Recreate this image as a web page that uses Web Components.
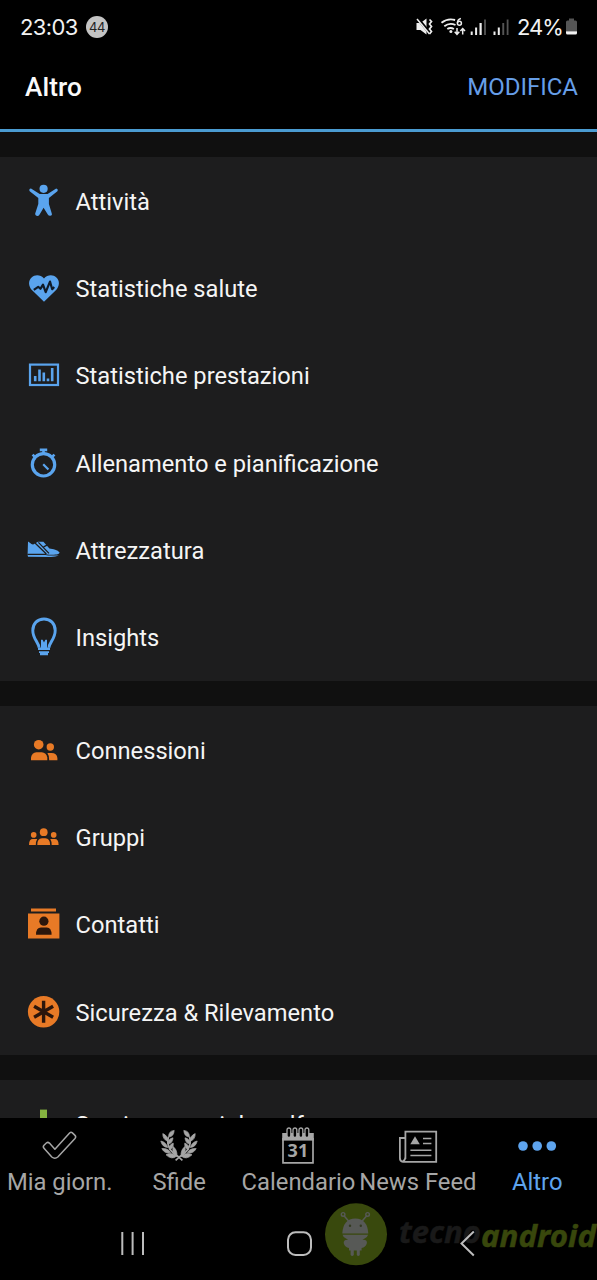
<!DOCTYPE html>
<html lang="it">
<head>
<meta charset="utf-8">
<title>Altro</title>
<style>
html, body { margin: 0; background: #000; }
body { width: 597px; height: 1280px; overflow: hidden; font-family: Roboto, sans-serif; }
</style>
</head>
<body>
<more-screen></more-screen>
<script>
const WREATH_HALF = `<path stroke="currentColor" stroke-width=".7" d="M14.2 3.4 Q8.4 4 8.6 10 Q13.8 9.8 14.2 3.4ZM2.8 6.6 Q2.6 12.6 8 14.4 Q8 8.6 2.8 6.6ZM13 10.8 Q7.8 12 7.8 17 Q12.6 16.8 13 10.8ZM.8 14 Q2.1 20 7.8 20.6 Q6.2 15.2 .8 14ZM13.2 16 Q8.4 18 9.4 22.9 Q14 21.2 13.2 16ZM1.8 21.6 Q5 27.4 10.6 25.6 Q7.8 20.9 1.8 21.6ZM13 19.6 Q17.4 22.4 17 29.4 Q11.6 26.6 13 19.6ZM6 27.8 Q12 24.4 16.6 29.2 Q11.6 33.2 6 27.8Z"/><path fill="none" stroke="currentColor" stroke-width="1.7" d="M8.4 10 Q5.4 22 18.2 29.6 L22.4 33.4"/>`;

const ICONS = {
  activity: `<circle cx="17.6" cy="11.8" r="4.1" fill="currentColor"/><path fill="currentColor" d="M5 11.6 Q2.4 12 3.7 14.3 L12.3 21 V27 L9.2 36.6 Q9 39 11.8 38.9 Q13 38.8 13.6 37.6 L17.6 30.8 L21.8 37.6 Q22.6 38.9 24.2 38.8 Q26.6 38.3 25.7 36.2 L22.9 27 V21 L31.4 14.3 Q32.6 12.3 30.2 11.6 L21.6 17 H13.7 Z"/>`,
  heart: `<path fill="currentColor" d="M18 37.8 L6.4 26.6 C2 22 2.2 16.3 5.6 13.4 C9 10.3 14.7 10.5 18 14.6 C21.3 10.5 27 10.3 30.4 13.4 C33.8 16.3 34 22 29.6 26.6 Z"/><path fill="none" stroke="#101b28" stroke-width="2.2" stroke-linejoin="round" d="M7.8 25.8 L12.2 22.8 L14.4 24.8 L17 20.6 L19.7 28.2 L24 17.6 L26.2 25.2 L28.2 23"/>`,
  chart: `<rect x="4" y="13.6" width="28" height="20.4" fill="none" stroke="currentColor" stroke-width="2.2"/><path fill="none" stroke="currentColor" stroke-width="2.6" d="M9.2 30.3V25M13.5 30.3V18.4M17.8 30.3V21.6M22 30.3V27.6M26.2 30.3V17"/>`,
  watch: `<circle cx="17.5" cy="25.8" r="11.2" fill="none" stroke="currentColor" stroke-width="3.2"/><path fill="none" stroke="currentColor" stroke-width="2.6" d="M13.8 10.9H21.2M17.5 10.5V15.5M8.8 17.8L6.6 15.6M26.2 17.8L28.5 15.6"/><path stroke="currentColor" stroke-width="2.2" d="M17.2 25.3L22.4 30.6"/>`,
  shoe: `<path fill="currentColor" d="M2 15.6 C3.6 16.2 4.8 18.6 7.2 18.4 L12 15.8 H17.4 L23.4 22.4 C27 23 31.8 23.6 33.6 26.6 C33.4 29 26 29.4 20 28.2 H1.6 Z"/><path fill="currentColor" d="M1.5 28.6 H17 L22 29.6 H32.8 Q29 31.4 23 31 L2 30.8 Z"/><path fill="none" stroke="#1d1d1e" stroke-width="1.3" d="M9 17L20.4 28M1.5 28.3H20M12.4 16.4L23 27.4M17.6 20.8L21 19.2"/>`,
  bulb: `<path fill="none" stroke="currentColor" stroke-width="2.9" d="M13 34.8 C13 29.5 6.8 26.2 6.8 17.4 C6.8 10.5 11.5 6 18 6 C24.5 6 29.2 10.5 29.2 17.4 C29.2 26.2 23 29.5 23 34.8"/><path fill="currentColor" d="M12 34.6H24V37H12ZM13 38.2H23V40H13ZM14 40H22V42.3H14ZM15 26.7H16.6L18 29.5L19.4 26.7H21V34.8H15Z"/>`,
  people: `<g fill="currentColor"><circle cx="12.7" cy="18.7" r="4.8"/><circle cx="24.3" cy="21" r="3.7"/><path d="M5 34.3 V31.6 Q6 26.5 10.4 26.3 H15.6 Q20.4 26.5 21.3 31.6 V34.3Z"/><path d="M21.4 27.1 H25.5 Q30.8 27.2 31.4 32 V34.3 H23.2 Q23.4 29.8 21.4 27.1Z"/></g>`,
  group: `<g fill="currentColor"><circle cx="17.7" cy="19.2" r="3.9"/><circle cx="7.7" cy="21.9" r="2.8"/><circle cx="27.7" cy="21.9" r="2.8"/><path d="M11.3 31.9 Q11.2 25.4 16 25.3 H19.3 Q24.1 25.4 24.1 31.9Z"/><path d="M3 31.9 Q3 26.1 6.8 26.1 H11.2 Q9.8 28.5 9.8 31.9ZM32.6 31.9 Q32.6 26.1 28.8 26.1 H24.3 Q25.7 28.5 25.7 31.9Z"/></g>`,
  contact: `<path fill="currentColor" d="M5 8.5H30V11.6H5ZM2 13.4H33.4V38.6H2Z"/><g fill="#2b160c"><circle cx="17.9" cy="21.2" r="4.6"/><path d="M10 34.8 Q10 27.7 15 27.6 H20.8 Q25.5 27.7 25.6 34.8Z"/></g>`,
  safety: `<circle cx="17.6" cy="23.8" r="15.7" fill="currentColor"/><path stroke="#2b160c" stroke-width="3.4" d="M17.6 12.8V34.8M8.1 18.3L27.1 29.3M27.1 18.3L8.1 29.3"/>`,
  golf: `<path fill="currentColor" d="M14 9.6H21V40H14Z"/>`,
  check: `<path fill="none" stroke="currentColor" stroke-width="1.5" stroke-linejoin="round" d="M3 21.2 Q1.6 19.6 3 18.2 L5.6 15.8 Q7 14.8 8.4 16.1 L13.9 22.2 L28.6 6 Q30 4.6 31.4 5.9 L34 8.4 Q35.4 9.8 34 11.4 L16.8 30 Q13.8 32.4 10.8 30 Z"/>`,
  laurel: `<g fill="currentColor">${WREATH_HALF}</g><g fill="currentColor" transform="matrix(-1 0 0 1 38 0)">${WREATH_HALF}</g>`,
  calendar: `<path fill="none" stroke="currentColor" stroke-width="1.7" d="M4 11V35.8H34V11"/><path fill="currentColor" d="M3.2 6H34.8V13.6H3.2Z"/><g fill="#000" stroke="currentColor" stroke-width="1.3"><rect x="8" y="1" width="3.8" height="9.5" rx="1.9"/><rect x="14" y="1" width="3.8" height="9.5" rx="1.9"/><rect x="20" y="1" width="3.8" height="9.5" rx="1.9"/><rect x="26" y="1" width="3.8" height="9.5" rx="1.9"/></g><text x="18.9" y="30.3" text-anchor="middle" fill="currentColor" font-family="Open Sans" font-weight="700" font-size="18">31</text>`,
  news: `<g fill="none" stroke="currentColor" stroke-width="1.8"><path d="M6.4 32 V4.6 H37.2 V34.8 H4 Q.8 34.4 .9 31 V11 H6 M6.4 30 Q6.2 33.5 3.8 34.6"/><path stroke-width="1.5" d="M24 11.4H32.4M24 16.5H32.4M11.4 23.3H32.4M11.4 28.6H32.4"/></g><path fill="currentColor" d="M16 9.2L20.8 17.3H11.3Z"/>`,
  dots: `<g fill="currentColor"><circle cx="5" cy="19" r="4.8"/><circle cx="19.2" cy="19" r="4.8"/><circle cx="33.3" cy="19" r="4.8"/></g>`
};

function define(name, html) {
  customElements.define(name, class extends HTMLElement {
    constructor() {
      super();
      const t = document.createElement('template');
      t.innerHTML = html;
      this.attachShadow({ mode: 'open' }).append(t.content.cloneNode(true));
    }
  });
}

class GlyphIcon extends HTMLElement {
  connectedCallback() {
    const box = this.getAttribute('box') || '36 48';
    const [w, h] = box.split(' ');
    this.attachShadow({ mode: 'open' }).innerHTML =
      `<style>:host{display:block;flex:none}svg{display:block;overflow:visible}</style>
       <svg width="${w}" height="${h}" viewBox="0 0 ${w} ${h}">${ICONS[this.getAttribute('name')]}</svg>`;
  }
}
customElements.define('glyph-icon', GlyphIcon);

define('status-bar', `
<style>
:host { display: flex; height: 54px; box-sizing: border-box; padding: 0 19px 0 20px; align-items: center; color: #f2f2f2; font: 400 22px/54px Inter, sans-serif; }
.time { width: 58px; letter-spacing: -.6px; white-space: nowrap; }
.count { width: 22px; height: 22px; margin-left: 8px; border-radius: 50%; background: #c4c4c4; color: #222; font: 400 13px/22px Inter, sans-serif; text-align: center; letter-spacing: -.4px; }
svg { margin-left: auto; display: block; }
.pct { width: 45px; margin-left: 7px; white-space: nowrap; letter-spacing: -1px; }
.bat { margin-left: 3px; }
</style>
<span class="time">23:03</span><span class="count">44</span>
<svg width="94" height="22" viewBox="415.5 16 94 22">
  <path fill="#eee" d="M416 23h4l6-4.5v16L420 30h-4z"/>
  <path stroke="#000" stroke-width="3" d="M416.5 17.5L430 34"/>
  <path stroke="#eee" stroke-width="1.5" d="M416.5 19L429 34"/>
  <path fill="none" stroke="#eee" stroke-width="1.7" d="M429 19.5l2 2-2 2.5 2 2.5-2 2.5 2 2.5-2 2.5"/>
  <g fill="none" stroke="#eee" stroke-width="1.9"><path d="M441 22.8Q447 18 454.6 20M443.8 26.2Q449 22.3 455 25M446.8 29Q450 27 453.4 29"/><path stroke-width="1.5" d="M460.4 18.6Q457 19.3 457 23"/><circle cx="458.9" cy="23.3" r="2" stroke-width="1.5"/><path stroke-width="1.5" d="M456.5 28V34M454.2 31.8L456.5 34.3L458.8 31.8M462.2 34.5V29M459.9 31L462.2 28.5L464.5 31"/></g>
  <circle cx="450.4" cy="31.4" r="1.5" fill="#eee"/>
  <path fill="#eee" d="M470.2 31.5h2V35h-2zM474.6 27.5h2V35h-2zM479 23h2.2v12H479zM493 31.5h2V35h-2zM497.3 27.5h2V35h-2z"/>
  <path fill="#555" d="M483.6 19.5h1.8V35h-1.8zM501.8 23h1.9v12h-1.9zM506.2 19.5h1.8V35h-1.8z"/>
</svg>
<span class="pct">24%</span>
<svg class="bat" width="13" height="20" viewBox="0 0 12 20"><path fill="#555" d="M3.5 1.5h5v2H10q1.5 0 1.5 1.5v9H.5V5Q.5 3.5 2 3.5h1.5z"/><path fill="#f2f2f2" d="M.5 14.3h11V16q0 1.5-1.5 1.5H2Q.5 17.5.5 16z"/></svg>
`);

define('title-bar', `
<style>
:host { display: flex; justify-content: space-between; align-items: center; height: 78px; box-sizing: border-box; padding: 0 19px 10px 25px; border-bottom: 3.5px solid #4a9bd1; }
b { color: #fafafa; font: 500 26.2px/40px Roboto, sans-serif; letter-spacing: .1px; }
span { color: #669ee8; font: 400 24px/40px Roboto, sans-serif; }
</style>
<b><slot></slot></b><span><slot name="action"></slot></span>
`);

define('menu-group', `
<style>:host { display: block; margin-top: 25px; background: #1d1d1e; color: var(--tint); }</style>
<slot></slot>
`);

class MenuRow extends HTMLElement {
  connectedCallback() {
    this.attachShadow({ mode: 'open' }).innerHTML = `
<style>
:host { display: flex; align-items: center; height: 87.35px; padding-left: 26px; box-sizing: border-box; }
span { margin: 2px 0 0 13.5px; color: #f5f5f5; font: 400 23.7px/32px Roboto, sans-serif; white-space: nowrap; }
</style><glyph-icon name="${this.getAttribute('icon')}"></glyph-icon><span><slot></slot></span>`;
  }
}
customElements.define('menu-row', MenuRow);

class TabItem extends HTMLElement {
  connectedCallback() {
    this.attachShadow({ mode: 'open' }).innerHTML = `
<style>
:host { display: flex; flex-direction: column; align-items: center; padding-top: 9px; color: #a6a6a6; }
:host([active]) { color: #5ea4ee; }
span { margin-top: 1px; font: 400 23.8px/32px Roboto, sans-serif; white-space: nowrap; }
</style><glyph-icon box="38 38" name="${this.getAttribute('icon')}"></glyph-icon><span><slot></slot></span>`;
  }
}
customElements.define('tab-item', TabItem);

define('tab-bar', `
<style>:host { display: grid; grid-template-columns: repeat(5, 119.4px); height: 91px; background: #000; }</style>
<slot></slot>
`);

define('site-mark', `
<style>
:host { position: absolute; left: 325px; top: 1203px; width: 272px; height: 64px; overflow: hidden; display: block; }
svg { display: block; }
</style>
<svg width="272" height="64" viewBox="0 0 272 64">
  <circle cx="31" cy="31.3" r="31" fill="#39490d"/>
  <g fill="#575956"><path d="M17.3 30.5Q18 15.8 30.3 15.4Q42.6 15.8 43.3 30.5Z"/><path d="M17.5 31.8H43.1Q42.4 34.6 39.6 35.4L37.4 36.8Q42.8 36.4 41.8 40.6Q40.6 44.4 36.6 45V47.6H34.8V52Q33.2 54.2 31.8 52V47.6H28.8V52Q27.2 54.2 25.6 52V47.6H24V45Q20 44.4 18.8 40.6Q18 36.4 23.2 36.8L21 35.4Q18.2 34.6 17.5 31.8Z"/></g>
  <path fill="none" stroke="#575956" stroke-width="1.5" d="M23.5 18L19 12.7M37.2 18L41.7 12.7"/>
  <g fill="none" stroke="#575956" stroke-width="1.4"><circle cx="18.1" cy="11.4" r="1.8"/><circle cx="42.6" cy="11.4" r="1.8"/></g>
  <g fill="#333b20"><circle cx="25" cy="22.8" r="1.2"/><circle cx="35.8" cy="22.8" r="1.2"/></g>
  <text x="74" y="40" textLength="82" lengthAdjust="spacingAndGlyphs" fill="#191919" stroke="#191919" stroke-width=".5" font-family="Noto Sans" font-weight="700" font-style="italic" font-size="30">tecno</text>
  <text x="156" y="44.4" textLength="115" lengthAdjust="spacingAndGlyphs" fill="#38470c" stroke="#38470c" stroke-width=".5" font-family="Noto Sans" font-weight="700" font-style="italic" font-size="31">android</text>
</svg>
`);

define('system-nav', `
<style>:host { display: block; position: relative; z-index: 1; height: 71px; } svg { display: block; }</style>
<svg width="597" height="71" viewBox="0 1209 597 71" fill="none" stroke="#bdbdbd" stroke-width="2">
  <path d="M122.3 1232V1255M132.6 1232V1255M143 1232V1255"/>
  <rect x="288" y="1232.3" width="23" height="22.6" rx="7.5"/>
  <path d="M473.8 1231.5L461.5 1243.5L473.8 1255.5"/>
</svg>
`);

define('more-screen', `
<style>
:host { display: flex; flex-direction: column; position: relative; width: 597px; height: 1280px; background: #000; overflow: hidden; }
status-bar, title-bar, tab-bar, system-nav { flex: none; }
main { flex: 1; min-height: 0; overflow: hidden; background: #101010; }
</style>
<status-bar></status-bar>
<title-bar>Altro<span slot="action">MODIFICA</span></title-bar>
<main>
  <menu-group style="--tint:#5aa4ee">
    <menu-row icon="activity">Attività</menu-row>
    <menu-row icon="heart">Statistiche salute</menu-row>
    <menu-row icon="chart">Statistiche prestazioni</menu-row>
    <menu-row icon="watch">Allenamento e pianificazione</menu-row>
    <menu-row icon="shoe">Attrezzatura</menu-row>
    <menu-row icon="bulb">Insights</menu-row>
  </menu-group>
  <menu-group style="--tint:#e87a26">
    <menu-row icon="people">Connessioni</menu-row>
    <menu-row icon="group">Gruppi</menu-row>
    <menu-row icon="contact">Contatti</menu-row>
    <menu-row icon="safety">Sicurezza &amp; Rilevamento</menu-row>
  </menu-group>
  <menu-group style="--tint:#85b340">
    <menu-row icon="golf">Scarica campi da golf</menu-row>
  </menu-group>
</main>
<tab-bar>
  <tab-item icon="check">Mia giorn.</tab-item>
  <tab-item icon="laurel">Sfide</tab-item>
  <tab-item icon="calendar">Calendario</tab-item>
  <tab-item icon="news">News Feed</tab-item>
  <tab-item icon="dots" active>Altro</tab-item>
</tab-bar>
<site-mark></site-mark>
<system-nav></system-nav>
`);
</script>
</body>
</html>
